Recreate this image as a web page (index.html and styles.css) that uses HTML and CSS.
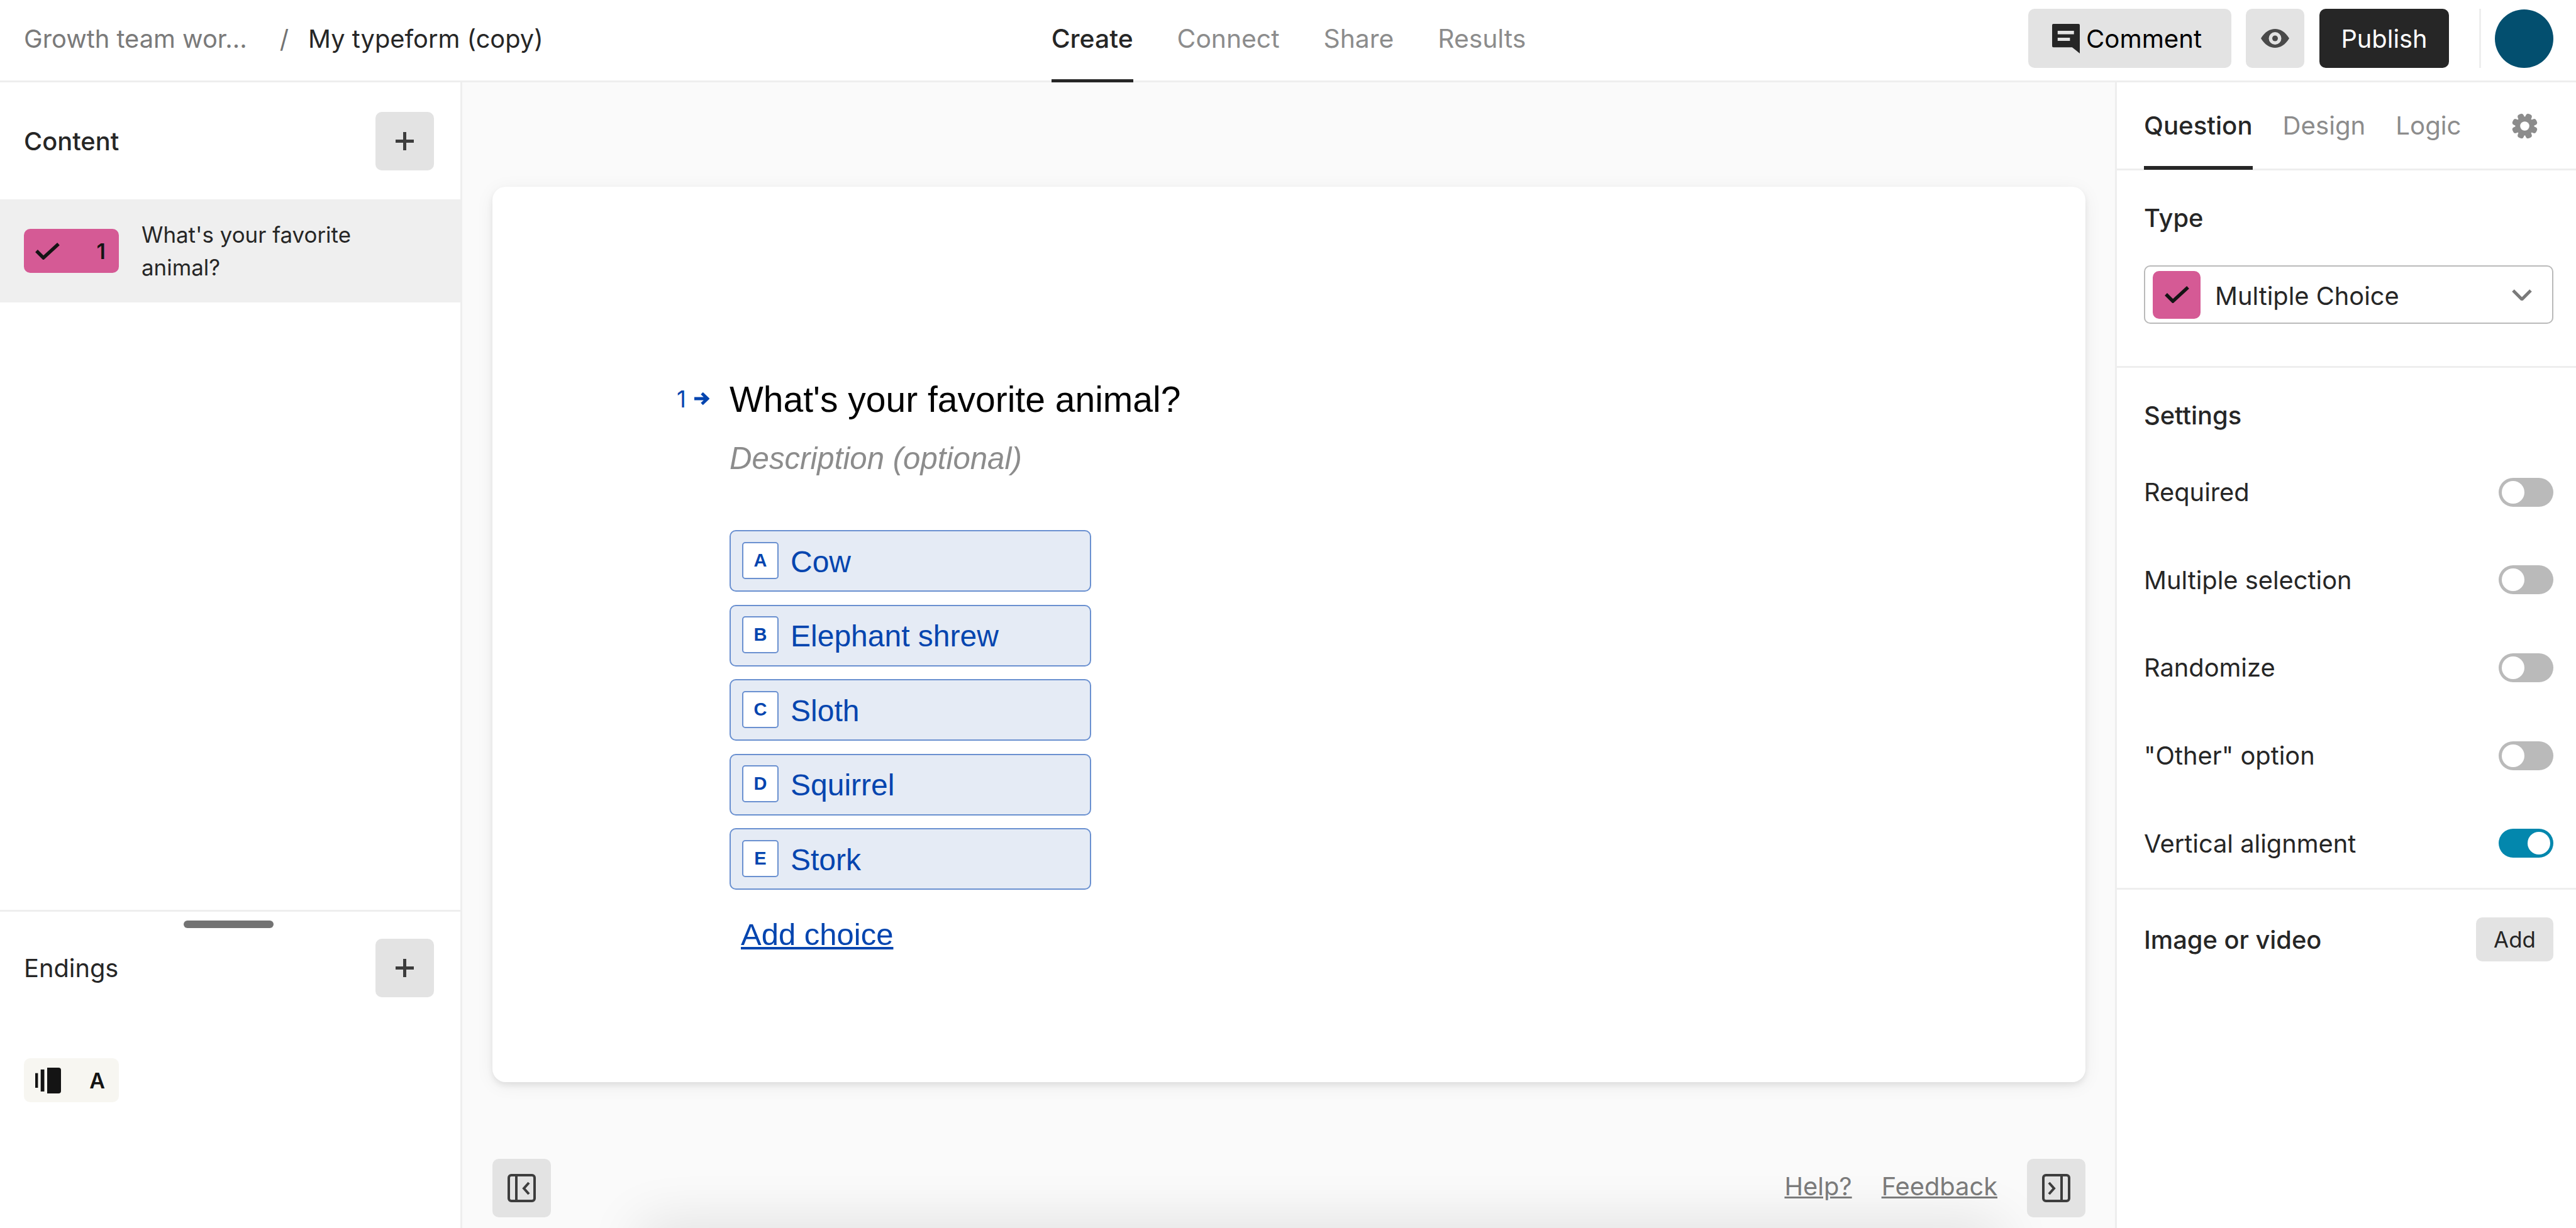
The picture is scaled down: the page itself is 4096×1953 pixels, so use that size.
FILE: index.html
```html
<!DOCTYPE html>
<html lang="en">
<head>
  <meta charset="UTF-8">
  <title>My typeform (copy)</title>
  <link rel="stylesheet" href="styles.css">
</head>
<body>

  <!-- Top bar -->
  <header class="topbar">
    <div class="crumbs">
      <span class="crumb-workspace">Growth team wor...</span>
      <span class="crumb-slash">/</span>
      <span class="crumb-form">My typeform (copy)</span>
    </div>
    <nav class="main-nav">
      <a class="nav-item active">Create</a>
      <a class="nav-item">Connect</a>
      <a class="nav-item">Share</a>
      <a class="nav-item">Results</a>
    </nav>
    <div class="top-actions">
      <button class="btn btn-comment">
        <svg class="icon-comment" viewBox="0 0 180 192">
          <path fill-rule="evenodd" d="M8 0H172a8 8 0 0 1 8 8V192L130 152H8a8 8 0 0 1-8-8V8a8 8 0 0 1 8-8zM36 45V67H142V45zM36 90V110H116V90z"/>
        </svg>
        Comment
      </button>
      <button class="btn btn-square">
        <svg class="icon-eye" viewBox="0 0 45 30">
          <path fill-rule="evenodd" d="M0 15C6 5 14 0 22.5 0S39 5 45 15C39 25 31 30 22.5 30S6 25 0 15zM22.5 5a10 10 0 1 0 0 20 10 10 0 0 0 0-20z"/>
          <circle cx="22.5" cy="15" r="4.5"/>
        </svg>
      </button>
      <button class="btn btn-publish">Publish</button>
      <span class="top-divider"></span>
      <span class="avatar"></span>
    </div>
  </header>

  <div class="workspace">

    <!-- Left sidebar -->
    <aside class="sidebar">
      <div class="side-head">
        <span class="side-title">Content</span>
        <button class="btn btn-square">
          <svg class="icon-plus" viewBox="0 0 29 29"><path d="M14.5 0V29M0 14.5H29"/></svg>
        </button>
      </div>
      <div class="side-item">
        <span class="badge badge-pink">
          <svg class="icon-check" viewBox="0 0 39 27"><path d="M2 13L13 24 37 2"/></svg>
          <span>1</span>
        </span>
        <span class="side-item-text">What's your favorite animal?</span>
      </div>
      <div class="endings">
        <span class="drag-handle"></span>
        <div class="side-head endings-head">
          <span class="side-title side-title-light">Endings</span>
          <button class="btn btn-square">
            <svg class="icon-plus" viewBox="0 0 29 29"><path d="M14.5 0V29M0 14.5H29"/></svg>
          </button>
        </div>
        <span class="badge badge-ending">
          <svg class="icon-ending" viewBox="0 0 41 41">
            <rect x="0" y="8.7" width="4.4" height="23.3"/>
            <rect x="8.7" y="2.9" width="5.8" height="35"/>
            <path d="M19 0H37a4 4 0 0 1 4 4V37a4 4 0 0 1-4 4H19z"/>
          </svg>
          <span>A</span>
        </span>
      </div>
    </aside>

    <!-- Canvas -->
    <main class="canvas">
      <span class="bottom-glow"></span>
      <section class="card">
        <div class="question">
          <div class="q-num">
            <span>1</span>
            <svg class="icon-arrow" viewBox="0 0 25 22"><path d="M1 11H21M13 2.5L22 11 13 19.5"/></svg>
          </div>
          <div class="q-body">
            <h1 class="q-title">What's your favorite animal?</h1>
            <p class="q-desc">Description (optional)</p>
            <ul class="choices">
              <li class="choice"><span class="choice-key">A</span>Cow</li>
              <li class="choice"><span class="choice-key">B</span>Elephant shrew</li>
              <li class="choice"><span class="choice-key">C</span>Sloth</li>
              <li class="choice"><span class="choice-key">D</span>Squirrel</li>
              <li class="choice"><span class="choice-key">E</span>Stork</li>
            </ul>
            <a class="add-choice">Add choice</a>
          </div>
        </div>
      </section>
      <div class="canvas-foot">
        <button class="btn btn-square">
          <svg class="icon-panel" viewBox="0 0 45 45"><rect x="2" y="2" width="41" height="41" rx="4"/><path d="M14 2V43M34 14L26 23 34 32"/></svg>
        </button>
        <div class="foot-links">
          <a>Help?</a>
          <a>Feedback</a>
          <button class="btn btn-square">
            <svg class="icon-panel" viewBox="0 0 45 45"><rect x="2" y="2" width="41" height="41" rx="4"/><path d="M31 2V43M11 14L19 23 11 32"/></svg>
          </button>
        </div>
      </div>
    </main>

    <!-- Right panel -->
    <aside class="panel">
      <div class="tabs">
        <a class="tab active">Question</a>
        <a class="tab">Design</a>
        <a class="tab">Logic</a>
        <svg class="icon-gear" viewBox="-20.5 -20.5 41 41">
          <g>
            <rect x="-5" y="-20.5" width="10" height="41" rx="4" transform="rotate(22.5)"/>
            <rect x="-5" y="-20.5" width="10" height="41" rx="4" transform="rotate(67.5)"/>
            <rect x="-5" y="-20.5" width="10" height="41" rx="4" transform="rotate(112.5)"/>
            <rect x="-5" y="-20.5" width="10" height="41" rx="4" transform="rotate(157.5)"/>
            <circle r="15"/>
          </g>
          <circle class="gear-hole" r="7.3"/>
        </svg>
      </div>

      <div class="panel-section type-section">
        <div class="panel-label">Type</div>
        <div class="type-select">
          <span class="type-swatch">
            <svg class="icon-check" viewBox="0 0 39 27"><path d="M2 13L13 24 37 2"/></svg>
          </span>
          <span class="type-name">Multiple Choice</span>
          <svg class="icon-chevron" viewBox="0 0 32 18"><path d="M2 2L16 16 30 2"/></svg>
        </div>
      </div>

      <div class="panel-section settings-section">
        <div class="panel-label settings-label">Settings</div>
        <div class="setting-row"><span>Required</span><span class="toggle"><i></i></span></div>
        <div class="setting-row"><span>Multiple selection</span><span class="toggle"><i></i></span></div>
        <div class="setting-row"><span>Randomize</span><span class="toggle"><i></i></span></div>
        <div class="setting-row"><span>"Other" option</span><span class="toggle"><i></i></span></div>
        <div class="setting-row"><span>Vertical alignment</span><span class="toggle on"><i></i></span></div>
      </div>

      <div class="media-row">
        <span class="panel-label">Image or video</span>
        <button class="btn btn-add">Add</button>
      </div>
    </aside>
  </div>

</body>
</html>
```

FILE: styles.css
```css
/* Base */
html, body {
  margin: 0;
  height: 100%;
}

body {
  display: flex;
  flex-direction: column;
  height: 100vh;
  overflow: hidden;
  background-color: #fff;
  color: #262626;
  font-family: Inter, "Noto Sans", sans-serif;
  font-size: 39.8px;
}

.btn {
  display: inline-flex;
  align-items: center;
  justify-content: center;
  border: none;
  border-radius: 10px;
  background-color: #e3e3e3;
  color: #000;
  font-family: inherit;
  font-size: inherit;
  padding: 0;
}

.btn-square {
  flex: none;
  width: 93px;
  height: 93px;
}

/* Top bar */
.topbar {
  flex: none;
  display: grid;
  grid-template-columns: 1fr auto 1fr;
  align-items: center;
  box-sizing: border-box;
  height: 131px;
  padding: 14px 36px 23px 38px;
  border-bottom: 3px solid #eeeeee;
}

.crumbs {
  display: flex;
  align-items: center;
}

.crumb-workspace {
  color: #7a7a7a;
}

.crumb-slash {
  margin-left: 52px;
  color: #737373;
}

.crumb-form {
  margin-left: 31px;
  color: #262626;
}

.main-nav {
  display: flex;
  gap: 70px;
  font-size: 40.8px;
}

.nav-item {
  box-sizing: content-box;
  height: 94px;
  line-height: 94px;
  padding-bottom: 18px;
  margin-bottom: -23px;
  border-bottom: 5px solid transparent;
  color: #8c8c8c;
}

.nav-item.active {
  color: #262626;
  font-weight: 500;
  border-bottom-color: #262626;
}

.top-actions {
  display: flex;
  align-items: center;
  justify-content: flex-end;
}

.btn-comment {
  justify-content: flex-start;
  gap: 10px;
  width: 323px;
  height: 94px;
  padding-left: 38px;
  font-size: 40.2px;
}

.icon-comment {
  width: 44px;
  height: 47px;
  fill: #262626;
}

.top-actions .btn-square {
  height: 94px;
  margin-left: 23px;
}

.icon-eye {
  width: 45px;
  height: 30px;
  fill: #4a4a4a;
}

.btn-publish {
  width: 206px;
  height: 94px;
  margin-left: 24px;
  background-color: #262626;
  color: #fff;
}

.top-divider {
  width: 3px;
  height: 94px;
  margin-left: 48px;
  background-color: #eeeeee;
}

.avatar {
  width: 93px;
  height: 93px;
  margin-left: 22px;
  border-radius: 50%;
  background-color: #034f6f;
}

/* Main columns */
.workspace {
  flex: 1;
  min-height: 0;
  display: grid;
  grid-template-columns: 735px 1fr 733px;
}

/* Left sidebar */
.sidebar {
  display: flex;
  flex-direction: column;
  box-sizing: border-box;
  border-right: 3px solid #eeeeee;
}

.side-head {
  display: flex;
  align-items: center;
  justify-content: space-between;
  padding: 47px 42px 46px 38px;
}

.side-title {
  font-weight: 500;
}

.side-title-light {
  font-weight: 400;
}

.icon-plus {
  width: 29px;
  height: 29px;
  fill: none;
  stroke: #3d3d3d;
  stroke-width: 5;
}

.side-item {
  display: flex;
  align-items: center;
  height: 164px;
  padding-left: 38px;
  background-color: #efefef;
}

.side-item-text {
  width: 400px;
  margin-left: 36px;
  font-size: 34.9px;
  line-height: 52px;
}

.badge {
  flex: none;
  display: flex;
  align-items: center;
  justify-content: space-between;
  box-sizing: border-box;
  width: 151px;
  height: 70px;
  padding: 0 21px 0 18px;
  border-radius: 10px;
  font-size: 34px;
  font-weight: 600;
  color: #141414;
}

.badge-pink {
  background-color: #d55a95;
}

.badge-ending {
  margin: 97px 0 0 38px;
  background-color: #f7f6f1;
  padding-right: 22px;
}

.icon-check {
  width: 39px;
  height: 27px;
  fill: none;
  stroke: #141414;
  stroke-width: 5.5;
}

.icon-ending {
  width: 41px;
  height: 41px;
  fill: #141414;
}

.endings {
  margin-top: auto;
  box-sizing: border-box;
  height: 506px;
  border-top: 3px solid #eeeeee;
  display: flex;
  flex-direction: column;
}

.drag-handle {
  width: 143px;
  height: 12px;
  margin: 14px 0 0 292px;
  border-radius: 6px;
  background-color: #737373;
}

.endings-head {
  padding-top: 17px;
  padding-bottom: 0;
}

/* Canvas */
.canvas {
  position: relative;
  display: flex;
  flex-direction: column;
  overflow: hidden;
  padding: 166px 47px 17px 48px;
  background-color: #fafafa;
}

.bottom-glow {
  position: absolute;
  left: 284px;
  right: 181px;
  top: 100%;
  height: 60px;
  box-shadow: 0 0 90px rgba(0, 0, 0, 0.14);
}

.card {
  position: relative;
  height: 1424px;
  box-sizing: border-box;
  padding: 301px 0 0 293px;
  border-radius: 21px;
  background-color: #fff;
  box-shadow: 0 5px 10px rgba(0, 0, 0, 0.08), 0 5px 31px rgba(0, 0, 0, 0.06);
}

.question {
  display: flex;
}

.q-num {
  flex: none;
  display: flex;
  align-items: flex-start;
  gap: 12px;
  width: 84px;
  height: 74px;
  color: #0445af;
  font-size: 36.5px;
  line-height: 74px;
}

.icon-arrow {
  width: 25px;
  height: 22px;
  margin-top: 25px;
  fill: none;
  stroke: #0445af;
  stroke-width: 5;
}

.q-title {
  margin: 0;
  font-family: "Liberation Sans", Arial, sans-serif;
  font-size: 57px;
  font-weight: 400;
  line-height: 74px;
  color: #000;
}

.q-desc {
  margin: 22px 0 0;
  font-family: "Liberation Sans", Arial, sans-serif;
  font-size: 49.2px;
  font-style: italic;
  line-height: 70px;
  color: #8c8c8c;
}

.choices {
  list-style: none;
  margin: 79px 0 0;
  padding: 0;
}

.choice {
  display: flex;
  align-items: center;
  box-sizing: border-box;
  width: 575px;
  height: 98px;
  margin-bottom: 20.6px;
  padding: 2px 0 0 18px;
  border: 2.6px solid #6a90d0;
  border-radius: 10px;
  background-color: #e5ebf5;
  color: #0445af;
  font-family: "Liberation Sans", Arial, sans-serif;
  font-size: 48px;
}

.choice-key {
  display: flex;
  align-items: center;
  justify-content: center;
  box-sizing: border-box;
  width: 58px;
  height: 59px;
  margin: -4px 19px 0 0;
  border: 2.6px solid #6a90d0;
  border-radius: 5px;
  background-color: #fff;
  font-size: 29px;
  font-weight: 700;
}

.add-choice {
  display: block;
  margin: 34px 0 0 18px;
  font-family: "Liberation Sans", Arial, sans-serif;
  font-size: 49px;
  line-height: 74px;
  color: #0445af;
  text-decoration: underline;
}

.canvas-foot {
  display: flex;
  align-items: center;
  justify-content: space-between;
  margin-top: auto;
  position: relative;
}

.foot-links {
  display: flex;
  align-items: center;
  gap: 47px;
}

.foot-links a {
  margin-bottom: 6px;
  color: #7a7a7a;
  text-decoration: underline;
}

.icon-panel {
  width: 45px;
  height: 45px;
  fill: none;
  stroke: #3d3d3d;
  stroke-width: 4;
}

/* Right panel */
.panel {
  display: flex;
  flex-direction: column;
  box-sizing: border-box;
  border-left: 3px solid #eeeeee;
}

.tabs {
  flex: none;
  display: flex;
  align-items: center;
  box-sizing: border-box;
  height: 140px;
  padding-left: 43px;
  border-bottom: 3px solid #eeeeee;
  font-size: 40.2px;
}

.tab {
  display: flex;
  align-items: center;
  height: 140px;
  box-sizing: border-box;
  margin-right: 48px;
  padding-top: 6px;
  color: #8c8c8c;
  border-bottom: 6px solid transparent;
}

.tab.active {
  color: #262626;
  font-weight: 500;
  border-bottom-color: #262626;
}

.icon-gear {
  width: 41px;
  height: 41px;
  margin-left: auto;
  margin-right: 61px;
  margin-top: 2px;
  fill: #8c8c8c;
}

.gear-hole {
  fill: #fff;
}

.panel-section {
  border-bottom: 3px solid #eeeeee;
  padding: 0 36px 0 43px;
}

.panel-label {
  font-weight: 500;
}

.type-section {
  flex: none;
  box-sizing: border-box;
  height: 314px;
  padding-top: 51px;
}

.type-select {
  display: flex;
  align-items: center;
  box-sizing: border-box;
  height: 93px;
  margin-top: 51px;
  padding: 0 32px 0 12px;
  border: 2.6px solid #bababa;
  border-radius: 10px;
}

.type-swatch {
  display: flex;
  align-items: center;
  justify-content: center;
  width: 76px;
  height: 76px;
  border-radius: 10px;
  background-color: #d55a95;
}

.type-name {
  margin-left: 23px;
  padding-top: 3px;
}

.icon-chevron {
  width: 32px;
  height: 18px;
  margin-left: auto;
  fill: none;
  stroke: #7a7a7a;
  stroke-width: 5;
}

.settings-section {
  flex: none;
  box-sizing: border-box;
  height: 830px;
  padding-top: 51px;
}

.settings-label {
  height: 77px;
}

.setting-row {
  display: flex;
  align-items: center;
  justify-content: space-between;
  height: 139.6px;
}

.toggle {
  display: flex;
  align-items: center;
  box-sizing: border-box;
  width: 87px;
  height: 46px;
  padding: 0 5px;
  border-radius: 23px;
  background-color: #bababa;
}

.toggle i {
  width: 36px;
  height: 36px;
  border-radius: 50%;
  background-color: #fff;
}

.toggle.on {
  justify-content: flex-end;
  background-color: #0387ad;
}

.media-row {
  display: flex;
  align-items: center;
  justify-content: space-between;
  height: 158px;
  padding: 0 36px 0 43px;
}

.btn-add {
  width: 123px;
  height: 70px;
  font-size: 34.9px;
  color: #262626;
}
```
